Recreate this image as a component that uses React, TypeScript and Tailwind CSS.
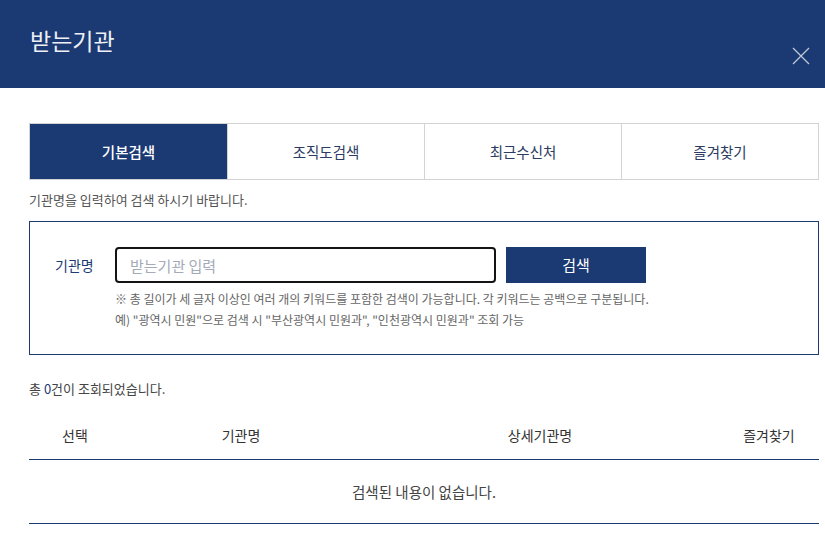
import React from "react";

const tabs = ["기본검색", "조직도검색", "최근수신처", "즐겨찾기"];

export default function App() {
  return (
    <div
      className="w-[825px] h-[543px] overflow-hidden bg-white text-[#333]"
      style={{ fontFamily: '"Noto Sans CJK KR", "Noto Sans", sans-serif' }}
    >
      {/* Header */}
      <div className="h-[88px] bg-[#1b3a73] flex justify-between pl-[30px] pr-[14px]">
        <h1 className="text-[23px] leading-[23px] text-[#eef0f5] pt-[29px]">받는기관</h1>
        <button className="mt-[46px] w-[20px] h-[20px] flex items-center justify-center">
          <svg width="18" height="18" viewBox="0 0 18 18" fill="none">
            <path d="M1 1L17 17M17 1L1 17" stroke="#c3c9d8" strokeWidth="1.2" />
          </svg>
        </button>
      </div>

      <div className="pl-[29px] pr-[6px] pt-[35px]">
        {/* Tabs */}
        <div className="grid grid-cols-4 border border-[#d3d3d3] h-[57px]">
          {tabs.map((t, i) => (
            <div
              key={t}
              className={
                i === 0
                  ? "flex items-center justify-center bg-[#1b3a73] text-white text-[14.5px] font-medium"
                  : "flex items-center justify-center text-[#2c3c63] text-[14.5px] border-l border-[#d3d3d3]"
              }
            >
              {t}
            </div>
          ))}
        </div>

        <p className="text-[13px] leading-[13px] text-[#555] mt-[13px]">기관명을 입력하여 검색 하시기 바랍니다.</p>

        {/* Search box */}
        <div className="mt-[15px] border border-[#1b3a73] h-[134px] pl-[25px] pt-[25px]">
          <div className="flex items-center">
            <span className="text-[14px] text-[#1b3a73] w-[60px]">기관명</span>
            <input
              className="w-[381px] h-[36px] border-2 border-[#141414] rounded-[4px] px-[13px] text-[15px] outline-none placeholder:text-[#a4aab8]"
              placeholder="받는기관 입력"
            />
            <button className="ml-[10px] w-[140px] h-[36px] bg-[#1b3a73] text-white text-[15px]">검색</button>
          </div>
          <div className="ml-[60px] mt-[5px] text-[12px] leading-[21px] text-[#666]">
            <p>※ 총 길이가 세 글자 이상인 여러 개의 키워드를 포함한 검색이 가능합니다. 각 키워드는 공백으로 구분됩니다.</p>
            <p>예) "광역시 민원"으로 검색 시 "부산광역시 민원과", "인천광역시 민원과" 조회 가능</p>
          </div>
        </div>

        <p className="mt-[26px] text-[13px] leading-[16px] text-[#444]">
          총 <span className="text-[#1b3a73]">0</span>건이 조회되었습니다.
        </p>

        {/* Table */}
        <div className="mt-[14px]">
          <div className="grid grid-cols-[92px_240px_358px_1fr] h-[49px] items-center border-b border-[#1b3a73] text-[14px] text-[#333]">
            <div className="text-center">선택</div>
            <div className="text-center">기관명</div>
            <div className="text-center">상세기관명</div>
            <div className="text-center">즐겨찾기</div>
          </div>
          <div className="h-[64px] flex items-center justify-center border-b border-[#1b3a73] text-[14.5px] text-[#444]">
            검색된 내용이 없습니다.
          </div>
        </div>
      </div>
    </div>
  );
}
